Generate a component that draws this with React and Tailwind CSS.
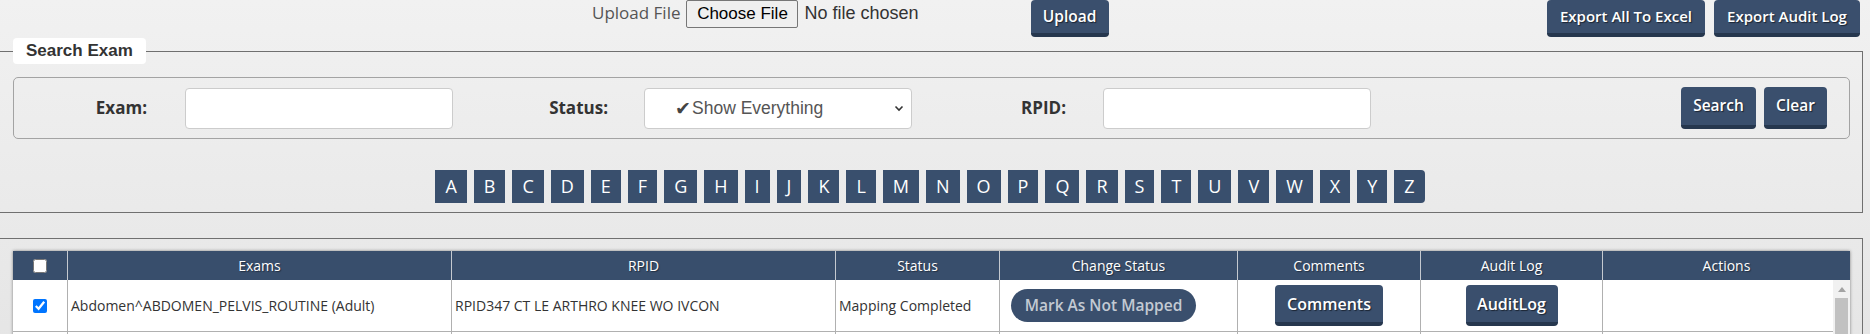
import React from 'react';

const LETTERS = 'ABCDEFGHIJKLMNOPQRSTUVWXYZ'.split('');
const COLS = 'grid-cols-[55px_384px_384px_164px_238px_183px_182px_1fr]';

const rows = [
  { exam: 'Abdomen^ABDOMEN_PELVIS_ROUTINE (Adult)', rpid: 'RPID347 CT LE ARTHRO KNEE WO IVCON', status: 'Mapping Completed', checked: true },
  { exam: 'Abdomen^ABDOMEN_ROUTINE (Adult)', rpid: 'RPID145 CT ABDOMEN WO IVCON', status: 'Mapping Completed', checked: false },
];

function Btn({ children, className = '' }) {
  return (
    <button
      type="button"
      className={`rounded-[4px] border-b-4 border-[#26374e] bg-[#3a4f6d] font-['Open_Sans',sans-serif] font-semibold text-white [text-shadow:1px_1px_1px_rgba(0,0,0,0.55)] ${className}`}
    >
      {children}
    </button>
  );
}

export default function App() {
  return (
    <div className="min-h-[334px] overflow-hidden bg-gradient-to-b from-[#f1f1f1] to-[#e3e3e3] font-['Open_Sans',sans-serif] text-[#333]">
      {/* top bar */}
      <div className="flex h-[37px] items-start">
        <div className="ml-[592px] flex items-start">
          <span className="text-[17px] leading-[26px] text-[#555]">Upload File</span>
          <span className="ml-[6px] flex h-[28px] w-[112px] items-center justify-center rounded-[2px] border border-[#767676] bg-[#efefef] font-['Liberation_Sans',Arial,sans-serif] text-[17px] text-black">
            Choose File
          </span>
          <span className="ml-[6px] font-['Liberation_Sans',Arial,sans-serif] text-[18px] leading-[26px] text-[#333]">No file chosen</span>
          <Btn className="ml-[112px] h-[37px] w-[78px] text-[15.5px]">Upload</Btn>
        </div>
        <div className="ml-auto mr-[10px] flex gap-[9px]">
          <Btn className="h-[37px] w-[158px] text-[15px]">Export All To Excel</Btn>
          <Btn className="h-[37px] w-[146px] text-[15px]">Export Audit Log</Btn>
        </div>
      </div>

      {/* search fieldset */}
      <fieldset className="mt-[1px] w-[1863px] border border-l-0 border-[#707070] pb-[9px]">
        <legend className="ml-[13px] h-[26px] rounded-[4px] bg-white px-[13px] font-['Liberation_Sans',Arial,sans-serif] text-[17px] font-bold leading-[26px] text-[#333]">
          Search Exam
        </legend>
        <div className="ml-[13px] mt-[13px] flex h-[62px] w-[1837px] items-center rounded-[5px] border border-[#a3a3a3]">
          <label className="w-[133px] text-right text-[17px] font-bold">Exam:</label>
          <input className="ml-[38px] h-[41px] w-[268px] rounded-[4px] border border-[#ccc] bg-white" />
          <label className="w-[155px] text-right text-[17px] font-bold">Status:</label>
          <div className="ml-[36px] flex h-[41px] w-[268px] items-center rounded-[4px] border border-[#ccc] bg-white pl-[30px] pr-[7px] font-['Liberation_Sans',Arial,sans-serif] text-[17.5px] text-[#555]">
            <span className="text-[19px] leading-none text-[#444]">✔</span>
            <span className="ml-[1px]">Show Everything</span>
            <svg className="ml-auto" width="10" height="10" viewBox="0 0 10 10">
              <path d="M1.5 3.5 L5 7 L8.5 3.5" fill="none" stroke="#333" strokeWidth="1.6" />
            </svg>
          </div>
          <label className="w-[154px] text-right text-[17px] font-bold">RPID:</label>
          <input className="ml-[37px] h-[41px] w-[268px] rounded-[4px] border border-[#ccc] bg-white" />
          <div className="ml-auto mr-[22px] flex gap-[8px]">
            <Btn className="h-[42px] w-[75px] text-[15.5px]">Search</Btn>
            <Btn className="h-[42px] w-[63px] text-[15.5px]">Clear</Btn>
          </div>
        </div>
        <div className="mt-[31px] flex justify-center gap-[7px] pr-[2px]">
          {LETTERS.map((l, i) => (
            <button
              key={l}
              type="button"
              className={`h-[33px] bg-[#394f6d] px-[10px] text-[18px] text-white ${i === LETTERS.length - 1 ? 'rounded-r-[4px]' : ''}`}
            >
              {l}
            </button>
          ))}
        </div>
      </fieldset>

      {/* results */}
      <div className="mt-[25px] w-[1863px] border-r border-t border-[#707070] pt-[12px]">
        <div className="ml-[13px] w-[1837px] shadow-[0_0_3px_rgba(0,0,0,0.45)]">
          <div className={`grid ${COLS} h-[29px] bg-[#384e6c] text-[14px] text-white [text-shadow:1px_1px_1px_rgba(0,0,0,0.4)]`}>
            <div className="flex items-center justify-center border-r border-[#c4c9d0]">
              <input type="checkbox" className="h-[14px] w-[14px]" />
            </div>
            {['Exams', 'RPID', 'Status', 'Change Status', 'Comments', 'Audit Log', 'Actions'].map((h, i) => (
              <div key={h} className={`flex items-center justify-center ${i < 6 ? 'border-r border-[#c4c9d0]' : ''}`}>
                {h}
              </div>
            ))}
          </div>
          <div className="flex bg-white">
            <div className="flex-1">
              {rows.map((r, idx) => (
                <div key={idx} className={`grid ${COLS} h-[52px] border-b border-[#b0b0b0] text-[14px] text-[#333]`}>
                  <div className="flex items-center justify-center border-r border-[#b0b0b0]">
                    <input type="checkbox" defaultChecked={r.checked} className="h-[14px] w-[14px]" />
                  </div>
                  <div className="flex items-center border-r border-[#b0b0b0] pl-[3px]">{r.exam}</div>
                  <div className="flex items-center border-r border-[#b0b0b0] pl-[3px]">{r.rpid}</div>
                  <div className="flex items-center border-r border-[#b0b0b0] pl-[3px]">{r.status}</div>
                  <div className="flex items-center border-r border-[#b0b0b0] pl-[11px]">
                    <button type="button" className="h-[33px] w-[185px] rounded-full bg-[#3a4f6d] text-[15.5px] font-semibold text-[#c3cad3]">
                      Mark As Not Mapped
                    </button>
                  </div>
                  <div className="flex items-center justify-center border-r border-[#b0b0b0]">
                    <Btn className="h-[41px] w-[108px] text-[16px]">Comments</Btn>
                  </div>
                  <div className="flex items-center justify-center border-r border-[#b0b0b0]">
                    <Btn className="h-[41px] w-[92px] text-[16px]">AuditLog</Btn>
                  </div>
                  <div />
                </div>
              ))}
            </div>
            <div className="flex w-[17px] flex-col items-center bg-[#f1f1f1]">
              <svg className="mt-[7px]" width="8" height="5" viewBox="0 0 8 5">
                <path d="M0 5 L4 0 L8 5 Z" fill="#a3a3a3" />
              </svg>
              <div className="mt-[6px] h-[120px] w-[13px] bg-[#c1c1c1]" />
            </div>
          </div>
        </div>
      </div>
    </div>
  );
}
